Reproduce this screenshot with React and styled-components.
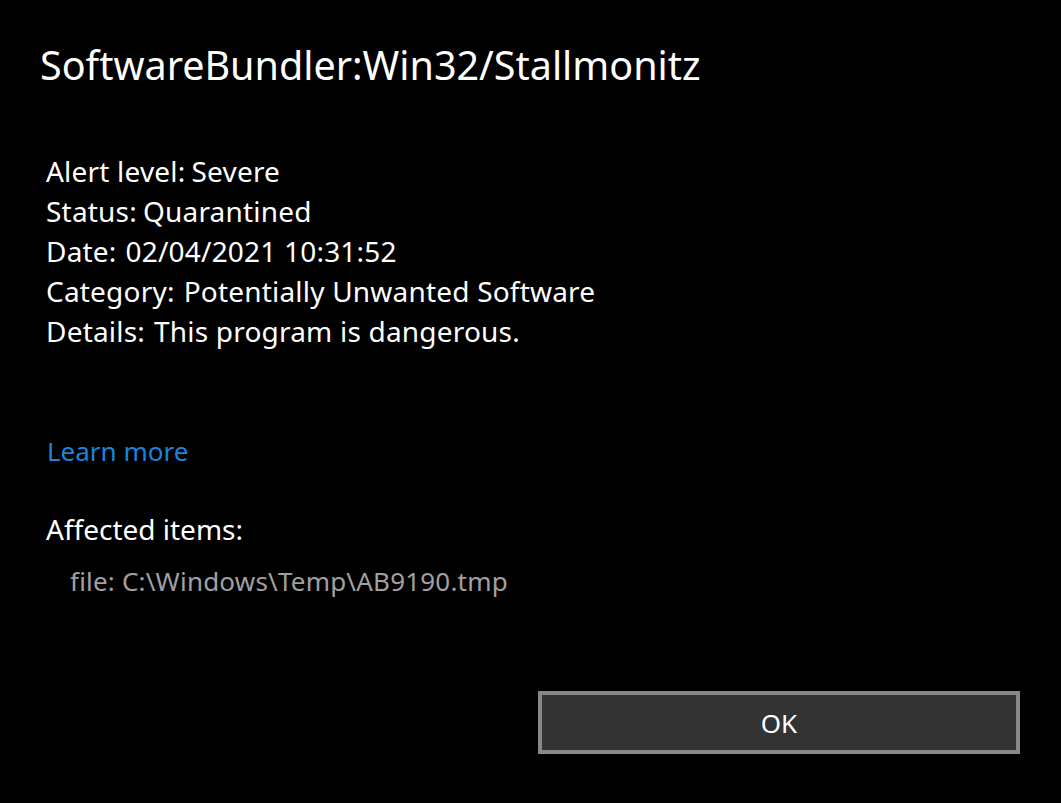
import React from 'react';
import styled, { createGlobalStyle } from 'styled-components';

const GlobalStyle = createGlobalStyle`
  html, body {
    margin: 0;
    padding: 0;
    background: #000;
  }
  body {
    font-family: "Noto Sans", "Open Sans", sans-serif;
    color: #fff;
  }
`;

const Dialog = styled.div`
  width: 1061px;
  height: 803px;
  box-sizing: border-box;
  background: #000;
  display: flex;
  flex-direction: column;
  padding: 36px 41px 0 40px;
`;

const Title = styled.h1`
  margin: 0;
  font-weight: 400;
  font-size: 39.5px;
  line-height: 58px;
  color: #fff;
`;

const Facts = styled.div`
  display: flex;
  flex-direction: column;
  margin: 57px 0 0 6px;
`;

const Fact = styled.div`
  font-size: 28px;
  line-height: 40px;
  letter-spacing: 0.2px;
  color: #fff;
  display: flex;
  gap: ${({ $wide }) => ($wide ? '9px' : '6px')};
`;

const LearnMore = styled.a`
  margin: 80px 0 0 7px;
  font-size: 26px;
  line-height: 40px;
  color: #1a84dc;
  text-decoration: none;
  align-self: flex-start;
`;

const SectionLabel = styled.div`
  margin: 38px 0 0 6px;
  font-size: 28px;
  line-height: 40px;
  color: #fff;
`;

const ItemPath = styled.div`
  margin: 12px 0 0 30px;
  font-size: 26px;
  line-height: 40px;
  letter-spacing: 0.2px;
  color: #a0a0a0;
`;

const Footer = styled.div`
  margin-top: auto;
  margin-bottom: 49px;
  display: flex;
  justify-content: flex-end;
`;

const OkButton = styled.button`
  width: 482px;
  height: 63px;
  box-sizing: border-box;
  background: #333;
  border: 4px solid #888;
  color: #fff;
  font-family: inherit;
  font-size: 26px;
  padding: 0;
`;

const facts = [
  ['Alert level:', 'Severe'],
  ['Status:', 'Quarantined'],
  ['Date:', '02/04/2021 10:31:52', true],
  ['Category:', 'Potentially Unwanted Software', true],
  ['Details:', 'This program is dangerous.', true],
];

export default function App() {
  return (
    <>
      <GlobalStyle />
      <Dialog>
        <Title>SoftwareBundler:Win32/Stallmonitz</Title>
        <Facts>
          {facts.map(([label, value, wide]) => (
            <Fact key={label} $wide={wide}>
              <span>{label}</span>
              <span>{value}</span>
            </Fact>
          ))}
        </Facts>
        <LearnMore href="#">Learn more</LearnMore>
        <SectionLabel>Affected items:</SectionLabel>
        <ItemPath>file: C:\Windows\Temp\AB9190.tmp</ItemPath>
        <Footer>
          <OkButton>OK</OkButton>
        </Footer>
      </Dialog>
    </>
  );
}
